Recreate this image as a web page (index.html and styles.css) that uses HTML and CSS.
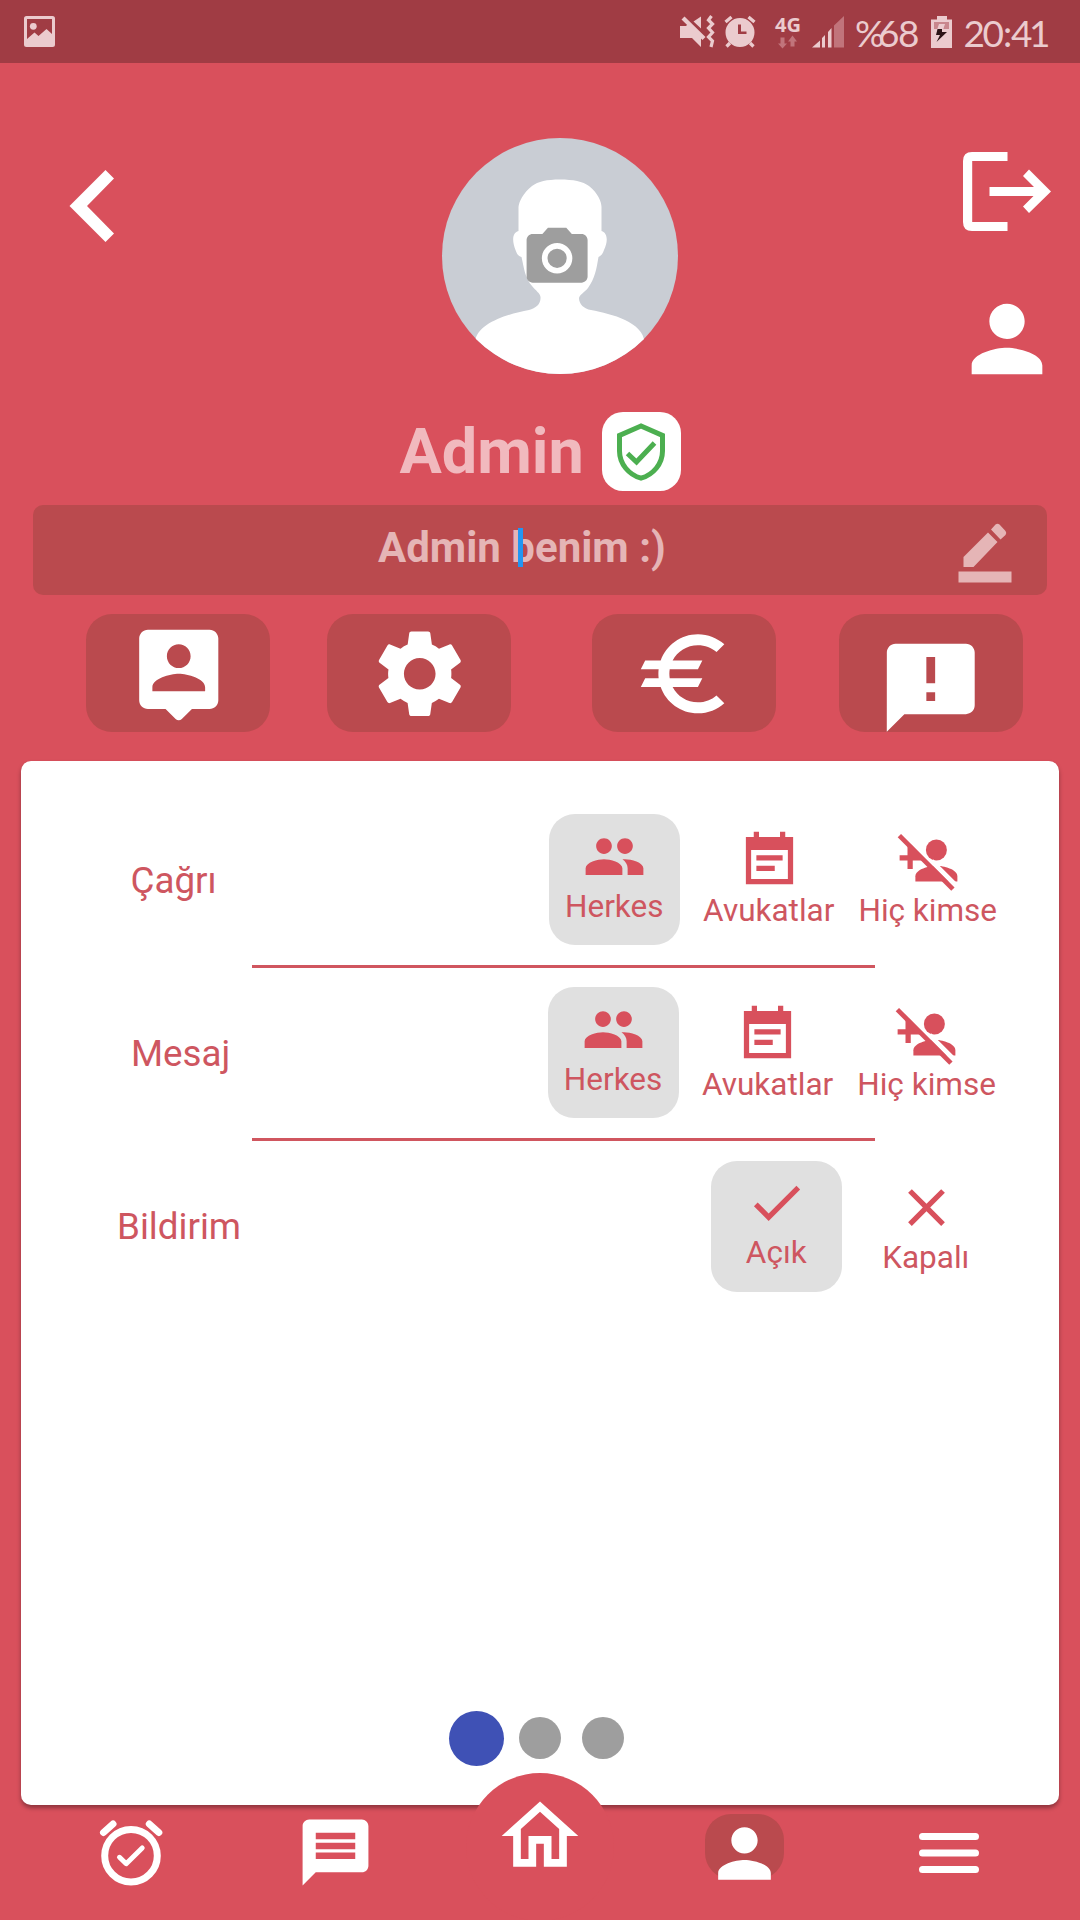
FILE: index.html
```html
<!DOCTYPE html>
<html lang="tr">
<head>
<meta charset="utf-8">
<title>Profil</title>
<link rel="stylesheet" href="styles.css">
</head>
<body>
<svg width="0" height="0" class="defs">
  <symbol id="people" viewBox="0 0 24 24"><path d="M16 11c1.66 0 2.99-1.34 2.99-3S17.66 5 16 5c-1.66 0-3 1.34-3 3s1.34 3 3 3zm-8 0c1.66 0 2.99-1.34 2.99-3S9.66 5 8 5C6.34 5 5 6.34 5 8s1.34 3 3 3zm0 2c-2.33 0-7 1.17-7 3.5V19h14v-2.5c0-2.33-4.67-3.5-7-3.5zm8 0c-.29 0-.62.02-.97.05 1.16.84 1.97 1.97 1.97 3.45V19h6v-2.5c0-2.33-4.67-3.5-7-3.5z"/></symbol>
  <symbol id="calendar" viewBox="0 0 24 24"><path fill-rule="evenodd" d="M18 3V1h-2v2H8V1H6v2H3v18h18V3zM19 19H5V8h14zM7 10h10v2H7zM7 14h7v2H7z"/></symbol>
  <symbol id="nobody" viewBox="0 0 24 24"><path d="M7 20v-2c0-2.66 5.33-4 8-4s8 1.34 8 4v2z"/><circle cx="15" cy="8" r="4"/><path d="M4 6h1.500L10 10.800V12H6v3.200H4V12H1v-2h3z"/><path d="M13.100 12.200l10 10" stroke="#fff" stroke-width="1.900"/><path d="M.9 2.500l20.400 20.400" stroke="currentColor" stroke-width="1.800"/></symbol>
  <symbol id="person" viewBox="0 0 24 24"><path d="M12 12c2.210 0 4-1.790 4-4s-1.790-4-4-4-4 1.790-4 4 1.790 4 4 4zm0 2c-2.670 0-8 1.340-8 4v2h16v-2c0-2.660-5.330-4-8-4z"/></symbol>
</svg>
<div class="screen">
  <div class="status">
    <svg class="status-photo" width="31" height="31" viewBox="0 0 31 31"><path fill-rule="evenodd" d="M2.500 0h26Q31 0 31 2.500v26q0 2.500-2.500 2.500h-26Q0 31 0 28.500v-26Q0 0 2.500 0zM3 3v20l7.500-6.500 4 3.500 8-7 5.500 5V3z"/><circle cx="9.300" cy="10.300" r="3.400"/></svg>
    <svg class="status-icons" width="384" height="63" viewBox="680 0 384 63">
      <path d="M680 26h6l2-2 13 13.500V47l-9-9h-12zM681.500 19.500l3-3 21 20.500-3 3zM693.500 21.500l7.500-5v12z"/>
      <path d="M711.500 16l-3 4 4 4-4 4 4 4.500-4 4.500 4 4-1.500 6" stroke="currentColor" stroke-width="3.200" class="line"/>
      <path fill-rule="evenodd" d="M740 18a14.500 14.500 0 1 1 0 29a14.500 14.500 0 1 1 0-29zM738 24.500v9.500h8.500v-2.600h-5.500v-6.900z"/>
      <path d="M725.500 22l6-5M754.500 22l-6-5M730 43l-3.500 3.500M750 43l3.500 3.500" stroke="currentColor" stroke-width="3.300"/>
      <text class="net" x="775" y="31.500" textLength="26" lengthAdjust="spacingAndGlyphs">4G</text>
      <path class="dim" d="M780.500 37.500h4v6h2.500l-4.500 5-4.500-5h2.500zM790.500 46.500h4v-5h2.500l-4.500-6-4.500 6h2.500z"/>
      <path d="M812 47.500l8-7v7zM822 38l3-3v12.500h-3zM828 32l3.500-4v19.500H828z"/>
      <path class="dim" d="M834 25.500l10-9.500v31.500h-10z"/>
      <text class="clock" x="855 878 898" y="46.500">%68</text>
      <path d="M937 16h10v3.500h5V48h-21V19.500h6z"/>
      <path class="dim-cut" d="M934 22h15v7h-15z"/><path d="M939 24h6l-2 6h-6z"/>
      <path class="bolt" d="M937.500 29l4.500 0v3h5l-10.500 10 3.500-7h-4z"/>
      <text class="clock" x="963.500 982.500 1003 1011 1029" y="46.500">20:41</text>
    </svg>
  </div>

  <header class="top">
    <svg class="back" width="46" height="72" viewBox="0 0 46 72"><path d="M36.500 0L45 8.500 18 36l27 27.500-8.500 8.500L.5 36z"/></svg>
    <div class="avatar">
      <svg width="236" height="236" viewBox="0 0 236 236">
        <clipPath id="round"><circle cx="118" cy="118" r="118"/></clipPath>
        <g clip-path="url(#round)">
          <rect width="236" height="236" fill="#c9cdd4"/>
          <path fill="#fff" d="M118 41.500C131 41.500 141 43.500 147 48C156 55 159.500 64 159.500 69V93C166 95 166 104 162 112C160.500 117 158 118 156.500 119C154.500 131 153 140 146 150C142 155 138 156 137 160C137 166 142 171 149 172C170 176 201 184 202.500 204V236H33V204C35 185 66 176 87 172C94 170 99 166 98.500 159C98 155 94 153 90 148C83 140 82 130 79.500 119C76 118 75 116 73.500 112C70 103 70 95 76.500 93V69C77 64 81 55 90 48C96 43.500 105 41.500 118 41.500z"/>
        </g>
        <path transform="translate(78.500 83.700) scale(3.050)" fill="#9e9e9e" fill-rule="evenodd" d="M9 2L7.170 4H4c-1.100 0-2 .9-2 2v12c0 1.100.9 2 2 2h16c1.100 0 2-.9 2-2V6c0-1.100-.9-2-2-2h-3.170L15 2H9zm3 15c-2.760 0-5-2.240-5-5s2.240-5 5-5 5 2.240 5 5-2.240 5-5 5zM12 8.850a3.150 3.150 0 1 0 0 6.300a3.150 3.150 0 1 0 0-6.300z"/>
      </svg>
    </div>
    <div class="side">
      <svg width="88" height="79" viewBox="0 0 88 79"><path d="M44.500 0H9Q0 0 0 9v61q0 9 9 9h35.500v-9H9.200V9h35.300zM26.500 35v9h44L60 54.500l6 6.500L88 39.500 66 17.500 60 24l11 11z"/></svg>
      <svg width="106" height="106"><use href="#person"/></svg>
    </div>
  </header>

  <div class="name">
    <span>Admin</span>
    <div class="badge"><svg class="line" width="48" height="58" viewBox="0 0 48 58" stroke="#4caf50" stroke-width="5"><path d="M24 3L2.500 12.500V28C2.500 41 12 52 24 55.200C36 52 45.500 41 45.500 28V12.500zM10.500 30.500l9 8.500L37.500 20"/></svg></div>
  </div>

  <div class="bio">
    <p>Admin <span class="caret-host">benim<i class="caret"></i></span> :)</p>
    <svg width="54" height="60" viewBox="0 0 54 60"><path d="M5.500 34L30 9.500l9.500 9.500L15.500 44H5.500zM33 6.500L37.500 1.500q2-1.500 4 0L47.500 8q1.500 2 0 4L42.500 16.500zM.5 48.500h53V59.500H.5z"/></svg>
  </div>

  <div class="actions">
    <div class="action"><svg width="105.500" height="105.500" viewBox="0 0 24 24"><path d="M19 2H5c-1.110 0-2 .9-2 2v14c0 1.100.89 2 2 2h4l2.290 2.290c.39.39 1.020.39 1.410 0L15 20h4c1.100 0 2-.9 2-2V4c0-1.100-.9-2-2-2zm-7 3.300c1.490 0 2.700 1.210 2.700 2.700 0 1.490-1.210 2.700-2.700 2.700-1.490 0-2.700-1.210-2.700-2.700 0-1.490 1.210-2.700 2.700-2.700zM18 16H6v-.9c0-2 4-3.100 6-3.100s6 1.100 6 3.100v.9z"/></svg></div>
    <div class="action"><svg width="105.500" height="105.500" viewBox="0 0 24 24"><path d="M19.140 12.940c.04-.3.060-.61.060-.94 0-.32-.02-.64-.07-.94l2.030-1.580c.18-.14.23-.41.12-.61l-1.920-3.320c-.12-.22-.37-.29-.59-.22l-2.390.96c-.5-.38-1.030-.7-1.620-.94l-.36-2.540c-.04-.24-.24-.41-.48-.41h-3.840c-.24 0-.43.17-.47.41l-.36 2.540c-.59.24-1.130.57-1.620.94l-2.390-.96c-.22-.08-.47 0-.59.22L2.740 8.870c-.12.21-.08.47.12.61l2.030 1.580c-.05.3-.09.63-.09.94s.02.64.07.94l-2.030 1.580c-.18.14-.23.41-.12.61l1.920 3.320c.12.22.37.29.59.22l2.390-.96c.5.38 1.030.7 1.620.94l.36 2.540c.05.24.24.41.48.41h3.840c.24 0 .44-.17.47-.41l.36-2.540c.59-.24 1.130-.56 1.620-.94l2.390.96c.22.08.47 0 .59-.22l1.920-3.320c.12-.22.07-.47-.12-.61l-2.010-1.580zM12 15.600c-1.980 0-3.600-1.620-3.600-3.600s1.620-3.600 3.600-3.600 3.600 1.620 3.600 3.600-1.620 3.600-3.600 3.600z"/></svg></div>
    <div class="action"><svg width="105.500" height="105.500" viewBox="0 0 24 24"><path d="M15 18.500c-2.510 0-4.680-1.420-5.760-3.500H15l1-2H8.580c-.05-.33-.08-.66-.08-1s.03-.67.08-1H15l1-2H9.240C10.320 6.920 12.500 5.500 15 5.500c1.610 0 3.090.59 4.230 1.570L21 5.300C19.410 3.870 17.300 3 15 3c-3.920 0-7.240 2.510-8.480 6H3l-1 2h4.060c-.04.33-.06.66-.06 1s.02.67.06 1H3l-1 2h4.520c1.240 3.490 4.560 6 8.480 6 2.310 0 4.410-.87 6-2.300l-1.780-1.770c-1.130.98-2.600 1.570-4.220 1.570z"/></svg></div>
    <div class="action action-report"><svg width="105.500" height="105.500" viewBox="0 0 24 24"><path d="M20 2H4c-1.100 0-1.990.9-1.990 2L2 22l4-4h14c1.100 0 2-.9 2-2V4c0-1.100-.9-2-2-2zm-7 9h-2V5h2v6zm0 4h-2v-2h2v2z"/></svg></div>
  </div>

  <main class="card">
    <section class="row row-call">
      <h2>Çağrı</h2>
      <div class="opt selected"><svg><use href="#people"/></svg><span>Herkes</span></div>
      <div class="opt"><svg><use href="#calendar"/></svg><span>Avukatlar</span></div>
      <div class="opt"><svg><use href="#nobody"/></svg><span>Hiç kimse</span></div>
    </section>
    <hr>
    <section class="row row-message">
      <h2>Mesaj</h2>
      <div class="opt selected"><svg><use href="#people"/></svg><span>Herkes</span></div>
      <div class="opt"><svg><use href="#calendar"/></svg><span>Avukatlar</span></div>
      <div class="opt"><svg><use href="#nobody"/></svg><span>Hiç kimse</span></div>
    </section>
    <hr>
    <section class="row row-notify">
      <h2>Bildirim</h2>
      <div class="opt selected"><svg viewBox="0 0 24 24"><path d="M9 16.170L4.830 12l-1.420 1.410L9 19 21 7l-1.410-1.410z"/></svg><span>Açık</span></div>
      <div class="opt"><svg viewBox="0 0 24 24"><path d="M19 6.410L17.590 5 12 10.590 6.410 5 5 6.410 10.590 12 5 17.590 6.410 19 12 13.410 17.590 19 19 17.590 13.410 12z"/></svg><span>Kapalı</span></div>
    </section>
    <div class="dots"><i class="dot on"></i><i class="dot"></i><i class="dot"></i></div>
  </main>

  <nav class="nav">
    <div class="tab"><svg class="line" width="64" height="66" viewBox="99 1820 64 66" stroke="currentColor" stroke-linecap="round" stroke-linejoin="round"><circle cx="131" cy="1855.700" r="26.300" stroke-width="7"/><path d="M103.500 1832.500l9.500-8.500M158.800 1832.500l-9.500-8.500" stroke-width="7"/><path d="M119.500 1857.300l6.700 6.400 16-15.700" stroke-width="5"/></svg></div>
    <div class="tab tab-chat"><svg width="79" height="79" viewBox="0 0 24 24"><path fill-rule="evenodd" d="M20 2H4c-1.100 0-1.990.9-1.990 2L2 22l4-4h14c1.100 0 2-.9 2-2V4c0-1.100-.9-2-2-2zM18 14H6v-2h12v2zm0-3H6V9h12v2zm0-3H6V6h12v2z"/></svg></div>
    <div class="tab tab-home"><svg width="92" height="92" viewBox="0 0 24 24"><path d="M12 5.690l5 4.500V18h-2v-6H9v6H7v-7.810l5-4.500M12 3L2 12h3v8h6v-6h2v6h6v-8h3L12 3z"/></svg></div>
    <div class="tab tab-profile"><svg width="79" height="79"><use href="#person"/></svg></div>
    <div class="tab tab-menu"><svg width="60" height="40" viewBox="0 0 60 40" stroke="currentColor" stroke-width="7" stroke-linecap="round"><path d="M3.500 3.500h53M3.500 20h53M3.500 36.500h53"/></svg></div>
  </nav>
</div>
</body>
</html>
```
FILE: styles.css
```css
* { box-sizing: border-box; }
body, h2, p { margin: 0; }
body { font-family: Roboto, sans-serif; background: #d9505c; }
svg { display: block; fill: currentColor; flex: none; }
.line { fill: none; }
.defs { position: absolute; }
.screen {
  width: 1080px;
  height: 1920px;
  background: #d9505c;
  color: #fff;
  display: flex;
  flex-direction: column;
  overflow: hidden;
}

.status {
  height: 63px;
  background: #a03c44;
  color: #ebcbce;
  display: flex;
  align-items: flex-start;
  justify-content: space-between;
  padding: 0 16px 0 24px;
}
.status-photo { margin-top: 16px; }
.net { font: 700 19px "Noto Sans", sans-serif; }
.clock { font: 400 37px Lato, sans-serif; }
.dim { fill: #c1747b; }
.dim-cut { fill: #c9878d; }
.bolt { fill: #2c1416; }

.top {
  height: 349px;
  display: flex;
  align-items: flex-start;
  padding-left: 69px;
}
.back { margin-top: 107px; }
.avatar { margin: 75px 0 0 327px; }
.side {
  margin: 89px 0 0 275.600px;
  display: flex;
  flex-direction: column;
  align-items: center;
  gap: 54.600px;
}

.name {
  height: 92.500px;
  display: flex;
  align-items: flex-start;
  padding-left: 399.500px;
  color: #f1b9be;
  font-size: 63px;
  font-weight: 700;
  line-height: 79px;
}
.name span { width: 202px; }
.badge {
  width: 79px;
  height: 79px;
  border-radius: 21px;
  background: #fff;
  display: flex;
  align-items: center;
  justify-content: center;
}

.bio {
  height: 90.800px;
  margin: 0 33px;
  border-radius: 10px;
  background: #ba4a4e;
  color: #e5b5b6;
  display: flex;
  align-items: flex-start;
  justify-content: space-between;
  padding: 18px 35.500px 0 345px;
}
.bio p {
  font-size: 42px;
  font-weight: 700;
  line-height: 50px;
  white-space: nowrap;
}
.caret-host { position: relative; }
.caret {
  position: absolute;
  left: 6.500px;
  top: 5px;
  width: 5px;
  height: 39px;
  background: #2196f3;
}

.actions {
  margin-top: 19px;
  padding-left: 86.400px;
  display: flex;
}
.action {
  width: 184px;
  height: 118px;
  border-radius: 26px;
  background: #ba4a4e;
  display: flex;
  justify-content: center;
  padding: 6.500px 0 0 0;
}
.action + .action { margin-left: 57px; }
.action:nth-child(3) { margin-left: 81px; }
.action:nth-child(4) { margin-left: 62.200px; }
.action-report { padding-top: 20.500px; }

.card {
  height: 1044px;
  margin: 28.700px 21px 0 21px;
  border-radius: 10px;
  background: #fff;
  color: #d8505c;
  box-shadow: 0 3px 4px rgba(0, 0, 0, .35);
  padding-top: 53px;
  flex: none;
}
.row {
  display: grid;
  grid-template-columns: 1fr 131px 178px 140px;
  align-items: center;
  height: 131px;
  padding-right: 61px;
}
.row-call { padding-left: 109.500px; }
.row-message { padding-left: 110px; padding-right: 62.200px; }
.row-notify {
  padding-left: 96px;
  grid-template-columns: 1fr 131px 168px;
  padding-right: 49px;
}
.row h2 {
  font-size: 36.750px;
  font-weight: 400;
  line-height: 44px;
  color: #ce5660;
  padding-top: 2.500px;
}
.opt {
  display: flex;
  flex-direction: column;
  align-items: center;
}
.opt svg { width: 63px; height: 63px; }
.opt span {
  font-size: 31.500px;
  line-height: 37px;
  white-space: nowrap;
  color: #ce5660;
  padding-right: .5px;
}
.selected {
  height: 131px;
  border-radius: 26px;
  background: #e0e0e0;
  padding-top: 10.700px;
}
.card hr {
  width: 623px;
  height: 3px;
  margin: 20px 0 19.300px 231.300px;
  border: 0;
  background: #d0565f;
}
.dots {
  display: flex;
  align-items: center;
  gap: 21px;
  margin: 419.300px 0 0 428.300px;
}
.dot {
  width: 42px;
  height: 42px;
  border-radius: 50%;
  background: #9e9e9e;
}
.dot.on {
  width: 55px;
  height: 55px;
  margin-right: -6.500px;
  background: #3f51b5;
}

.nav {
  height: 115px;
  display: flex;
  align-items: flex-start;
  padding-left: 99px;
}
.tab:first-child { margin-top: 15px; }
.tab-chat { margin: 7.700px 0 0 133px; }
.tab-home {
  width: 148px;
  height: 148px;
  border-radius: 50%;
  background: #d9505c;
  margin: -32px 0 0 91px;
  padding: 17px 0 0 28px;
}
.tab-profile {
  width: 79px;
  height: 65px;
  border-radius: 26px;
  background: #ba4a4e;
  margin: 8.700px 0 0 91px;
}
.tab-menu { margin: 27.700px 0 0 135px; }
```
